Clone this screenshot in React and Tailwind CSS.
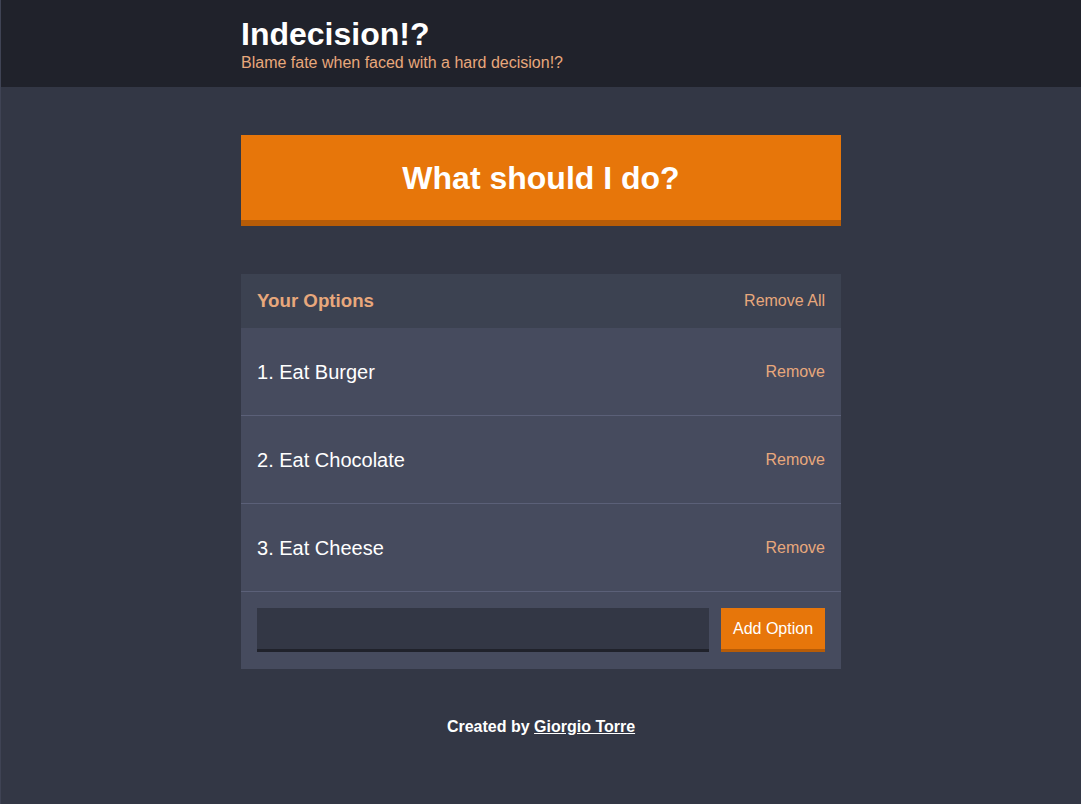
export default function App() {
  const options = ["Eat Burger", "Eat Chocolate", "Eat Cheese"];

  return (
    <div className="min-h-[804px] bg-[#333745] border-l border-[#3f4354] font-['Liberation_Sans',Arial,sans-serif] text-white">
      <header className="bg-[#20222b] py-[15px]">
        <div className="max-w-[600px] mx-auto">
          <h1 className="text-[32px] leading-[38px] font-bold">Indecision!?</h1>
          <h2 className="text-[16px] leading-[19px] text-[#e8a87c]">Blame fate when faced with a hard decision!?</h2>
        </div>
      </header>

      <div className="max-w-[600px] mx-auto pt-12">
        <button className="w-full h-[91px] bg-[#e7760a] border-b-[6px] border-[#b75c07] text-[32px] font-bold text-white">
          What should I do?
        </button>

        <div className="mt-12 bg-[#464b5e]">
          <div className="h-[54px] bg-[#3c4251] flex items-center justify-between px-4">
            <h3 className="text-[18.7px] font-bold text-[#e8a87c]">Your Options</h3>
            <button className="text-[16px] text-[#e8a87c]">Remove All</button>
          </div>

          {options.map((o, i) => (
            <div key={o} className="h-[88px] flex items-center justify-between px-4 border-b border-[#5b6078]">
              <p className="text-[20px] leading-[22px]">{i + 1}. {o}</p>
              <button className="text-[16px] text-[#e8a87c]">Remove</button>
            </div>
          ))}

          <form className="flex gap-3 px-4 pt-4 pb-[17px]" onSubmit={(e) => e.preventDefault()}>
            <input
              type="text"
              className="flex-1 h-[44px] bg-[#333745] border-b-[3px] border-[#20222b] outline-none px-3 text-white"
            />
            <button className="w-[104px] h-[44px] bg-[#e7760a] border-b-[3px] border-[#b75c07] text-[16px] text-white">
              Add Option
            </button>
          </form>
        </div>

        <footer className="pt-[46px] text-center text-[16px] font-bold">
          Created by <a href="#" className="underline">Giorgio Torre</a>
        </footer>
      </div>
    </div>
  );
}
